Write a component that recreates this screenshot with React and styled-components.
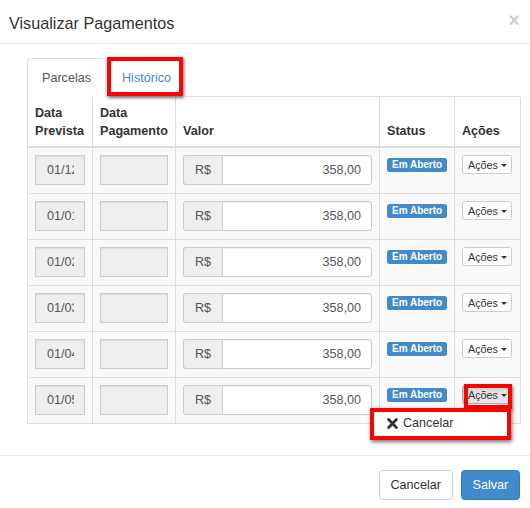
import React from "react";
import styled, { createGlobalStyle, css } from "styled-components";

const Global = createGlobalStyle`
  html, body { margin: 0; padding: 0; background: #fff; }
  body {
    font-family: "Liberation Sans", Arial, Helvetica, sans-serif;
    font-size: 12.6px;
    line-height: 18px;
    color: #333;
  }
  * { box-sizing: border-box; }
`;

const mark = (t, r, b, l) => css`
  &::after {
    content: "";
    position: absolute;
    top: ${t}px;
    right: ${r}px;
    bottom: ${b}px;
    left: ${l}px;
    border: 4px solid #f00;
    box-shadow: 1px 2px 3px rgba(0, 0, 0, 0.55);
    pointer-events: none;
  }
`;

const Modal = styled.div`
  width: 530px;
  height: 508px;
  display: flex;
  flex-direction: column;
  background: #fff;
`;

const Header = styled.div`
  height: 44px;
  padding: 0 10px 0 9px;
  display: flex;
  align-items: center;
  justify-content: space-between;
  border-bottom: 1px solid #e5e5e5;
`;

const Title = styled.h4`
  margin: 0;
  font-size: 16.2px;
  font-weight: normal;
  line-height: 18px;
  color: #333;
  padding-top: 3px;
`;

const Close = styled.button`
  border: 0;
  background: none;
  padding: 0;
  font-family: "Liberation Sans", Arial, sans-serif;
  font-size: 20px;
  font-weight: bold;
  line-height: 1;
  color: #000;
  opacity: 0.2;
  margin-top: -4px;
`;

const Body = styled.div`
  padding: 14px 10px 0 27px;
  height: 411px;
`;

const Tabs = styled.ul`
  list-style: none;
  margin: 0;
  padding: 0;
  display: flex;
  border-bottom: 1px solid #ddd;
  height: 39px;
`;

const Tab = styled.li`
  position: relative;
  margin-right: 1px;
  margin-bottom: -1px;
  height: 39px;
  padding: 0 14px;
  display: flex;
  align-items: center;
  border: 1px solid ${(p) => (p.$active ? "#ddd" : "transparent")};
  border-bottom-color: ${(p) => (p.$active ? "#fff" : "transparent")};
  border-radius: 4px 4px 0 0;
  background: #fff;
  color: ${(p) => (p.$active ? "#555" : "#428bca")};
  ${(p) => p.$mark && mark(-2, 2, 0, -1)}
`;

const Table = styled.table`
  width: 493px;
  border-collapse: collapse;
  table-layout: fixed;
  border: 1px solid #ddd;
  border-top: 0;
`;

const Th = styled.th`
  text-align: left;
  vertical-align: bottom;
  font-weight: bold;
  padding: 7px 7px 6px;
  line-height: 18px;
  border: 1px solid #ddd;
  border-top: 0;
  border-bottom: 2px solid #ddd;
  background: #fff;
  color: #333;
`;

const Td = styled.td`
  vertical-align: top;
  padding: 7px 7px 8px;
  border: 1px solid #ddd;
  background: #f9f9f9;
  position: relative;
`;

const Field = styled.input`
  display: block;
  width: 100%;
  height: 30px;
  padding: 0 10px 0 11px;
  border: 1px solid #ccc;
  border-radius: ${(p) => (p.$joined ? "0 3px 3px 0" : "0")};
  background: ${(p) => (p.$readonly ? "#eee" : "#fff")};
  color: #555;
  font-family: "Liberation Sans", Arial, sans-serif;
  font-size: 12.6px;
  text-align: ${(p) => (p.$right ? "right" : "left")};
  outline: none;
  box-shadow: inset 0 1px 1px rgba(0, 0, 0, 0.075);
`;

const InputGroup = styled.div`
  display: flex;
  height: 30px;
`;

const Addon = styled.span`
  width: 39px;
  flex: none;
  display: flex;
  align-items: center;
  justify-content: center;
  background: #eee;
  border: 1px solid #ccc;
  border-right: 0;
  border-radius: 3px 0 0 3px;
  color: #555;
`;

const Label = styled.span`
  display: inline-block;
  margin-top: 1px;
  padding: 2px 5px 2px 5px;
  font-size: 10px;
  font-weight: bold;
  line-height: 10px;
  color: #fff;
  background: #428bca;
  border-radius: 2.5px;
  white-space: nowrap;
`;

const BtnGroup = styled.div`
  position: relative;
  display: inline-block;
`;

const XsButton = styled.button`
  position: relative;
  display: inline-flex;
  align-items: center;
  gap: 3px;
  height: 19px;
  width: 50px;
  padding: 0 4px 0 5px;
  font-family: "Liberation Sans", Arial, sans-serif;
  font-size: 10.8px;
  color: #333;
  background: ${(p) => (p.$open ? "#e6e6e6" : "#fff")};
  border: 1px solid ${(p) => (p.$open ? "#adadad" : "#ccc")};
  border-radius: 3px;
  box-shadow: ${(p) => (p.$open ? "inset 0 3px 5px rgba(0,0,0,.125)" : "none")};
  ${(p) => p.$mark && mark(-2, -1, -6, 1)}
`;

const Caret = styled.span`
  display: inline-block;
  width: 0;
  height: 0;
  border-top: 3.6px solid #333;
  border-left: 3.6px solid transparent;
  border-right: 3.6px solid transparent;
  margin-top: 1px;
`;

const Menu = styled.ul`
  position: absolute;
  top: 23px;
  right: 1px;
  width: 141px;
  height: 32px;
  margin: 0;
  padding: 0;
  list-style: none;
  background: #fff;
  border: 4px solid #f00;
  box-shadow: 1px 2px 4px rgba(0, 0, 0, 0.55);
  z-index: 5;
  display: flex;
  align-items: center;
`;

const MenuItem = styled.li`
  display: flex;
  align-items: center;
  gap: 5px;
  padding: 0 0 2px 13px;
  color: #333;
  font-size: 12.6px;
  white-space: nowrap;
`;

const Footer = styled.div`
  border-top: 1px solid #e5e5e5;
  padding: 14px 10px 0;
  display: flex;
  justify-content: flex-end;
  gap: 8px;
`;

const Button = styled.button`
  height: 30px;
  padding: 0 10.8px;
  font-family: "Liberation Sans", Arial, sans-serif;
  font-size: 12.6px;
  border-radius: 3.5px;
  border: 1px solid ${(p) => (p.$primary ? "#357ebd" : "#ccc")};
  background: ${(p) => (p.$primary ? "#428bca" : "#fff")};
  color: ${(p) => (p.$primary ? "#fff" : "#333")};
`;

const RemoveIcon = () => (
  <svg width="11" height="11" viewBox="0 0 11 11" aria-hidden="true">
    <path
      d="M1.6 1.6 L9.4 9.4 M9.4 1.6 L1.6 9.4"
      stroke="#333"
      strokeWidth="2.8"
      strokeLinecap="round"
    />
  </svg>
);

const rows = [
  "01/12/2016",
  "01/01/2017",
  "01/02/2017",
  "01/03/2017",
  "01/04/2017",
  "01/05/2017",
];

export default function App() {
  return (
    <>
      <Global />
      <Modal>
        <Header>
          <Title>Visualizar Pagamentos</Title>
          <Close>×</Close>
        </Header>
        <Body>
          <Tabs>
            <Tab $active>Parcelas</Tab>
            <Tab $mark>Histórico</Tab>
          </Tabs>
          <Table>
            <colgroup>
              <col style={{ width: 65 }} />
              <col style={{ width: 83 }} />
              <col style={{ width: 204 }} />
              <col style={{ width: 75 }} />
              <col style={{ width: 66 }} />
            </colgroup>
            <thead>
              <tr>
                <Th>
                  Data
                  <br />
                  Prevista
                </Th>
                <Th>
                  Data
                  <br />
                  Pagamento
                </Th>
                <Th>Valor</Th>
                <Th>Status</Th>
                <Th>Ações</Th>
              </tr>
            </thead>
            <tbody>
              {rows.map((d, i) => {
                const last = i === rows.length - 1;
                return (
                  <tr key={d}>
                    <Td>
                      <Field $readonly readOnly value={d} />
                    </Td>
                    <Td>
                      <Field $readonly readOnly value="" />
                    </Td>
                    <Td>
                      <InputGroup>
                        <Addon>R$</Addon>
                        <Field $right $joined readOnly value="358,00" />
                      </InputGroup>
                    </Td>
                    <Td>
                      <Label>Em Aberto</Label>
                    </Td>
                    <Td>
                      <BtnGroup>
                        <XsButton $open={last} $mark={last}>
                          Ações <Caret />
                        </XsButton>
                        {last && (
                          <Menu>
                            <MenuItem>
                              <RemoveIcon />
                              Cancelar
                            </MenuItem>
                          </Menu>
                        )}
                      </BtnGroup>
                    </Td>
                  </tr>
                );
              })}
            </tbody>
          </Table>
        </Body>
        <Footer>
          <Button>Cancelar</Button>
          <Button $primary>Salvar</Button>
        </Footer>
      </Modal>
    </>
  );
}
